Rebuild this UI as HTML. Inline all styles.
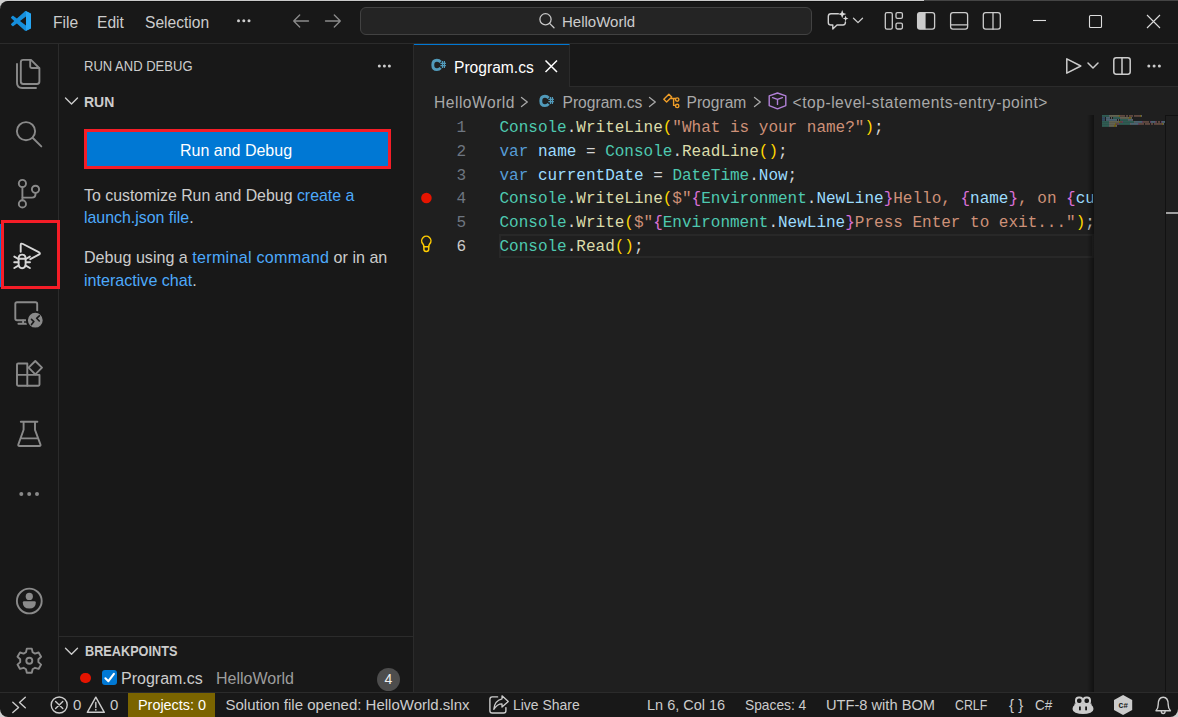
<!DOCTYPE html>
<html><head><meta charset="utf-8">
<style>
*{box-sizing:border-box;margin:0;padding:0}
html,body{width:1178px;height:717px;overflow:hidden;background:#181818}
body{position:relative;font-family:"Liberation Sans",sans-serif;color:#cccccc;font-size:15.6px}
.a{position:absolute;white-space:pre}
.mono{font-family:"Liberation Mono",monospace}
#ov{position:absolute;left:0;top:0;width:1178px;height:717px}
#topline{left:0;top:0;width:924px;height:1px;background:#c9c9c9}
#topline2{left:924px;top:0;width:254px;height:1px;background:#444444}
#titlebar{left:0;top:1px;width:1178px;height:43px;background:#181818;border-bottom:1px solid #2b2b2b}
#actbar{left:0;top:44px;width:59px;height:648px;background:#181818;border-right:1px solid #2b2b2b}
#sidebar{left:59px;top:44px;width:355px;height:648px;background:#181818;border-right:1px solid #2b2b2b}
#editor{left:414px;top:44px;width:764px;height:648px;background:#1f1f1f}
#tabs{left:414px;top:44px;width:764px;height:43px;background:#181818;border-bottom:1px solid #2b2b2b}
#tab{left:414px;top:44px;width:156px;height:43px;background:#1f1f1f;border-right:1px solid #2b2b2b;border-top:1px solid #0078d4}
#statusbar{left:0;top:692px;width:1178px;height:25px;background:#181818;border-top:1px solid #2b2b2b}
.link{color:#4daafc}
.code{font-family:"Liberation Mono",monospace;font-size:16px;line-height:23.82px}
.ln{position:absolute;left:414px;width:52px;text-align:right;color:#6e7681}
.cl{position:absolute;left:499.5px}
.t{color:#4ec9b0}.f{color:#dcdcaa}.p{color:#d4d4d4}.s{color:#ce9178}.k{color:#569cd6}.v{color:#9cdcfe}
.b1{color:#ffd700}.b2{color:#da70d6}
</style></head>
<body>
<div class="a" id="topline"></div><div class="a" id="topline2"></div>
<div class="a" id="titlebar"></div>
<div class="a" style="left:8px;top:1px;width:916px;height:1px;background:#0f0f0f"></div>
<div class="a" id="actbar"></div>
<div class="a" id="sidebar"></div>
<div class="a" id="editor"></div>
<div class="a" id="tabs"></div>
<div class="a" id="tab"></div>
<div class="a" id="statusbar"></div>
<div class="a" style="left:0;top:0;width:9px;height:9px;background:#cfcfcf"></div>
<div class="a" style="left:0;top:1px;width:18px;height:18px;background:#181818;border-top-left-radius:8px;border-top:1px solid #0e0e0e"></div>
<div class="a" style="left:0;top:708px;width:9px;height:9px;background:#cfcfcf"></div>
<div class="a" style="left:0;top:699px;width:18px;height:18px;background:#181818;border-bottom-left-radius:8px"></div>
<div class="a" style="left:1169px;top:708px;width:9px;height:9px;background:#cfcfcf"></div>
<div class="a" style="left:1160px;top:699px;width:18px;height:18px;background:#181818;border-bottom-right-radius:8px"></div>

<!-- TITLEBAR -->
<div class="a" id="t-file" style="left:53px;top:13px;line-height:20px">File</div>
<div class="a" id="t-edit" style="left:97px;top:13px;line-height:20px">Edit</div>
<div class="a" id="t-sel" style="left:145px;top:13px;line-height:20px">Selection</div>
<div class="a" id="search" style="left:360px;top:7px;width:452px;height:28px;border:1px solid #424242;border-radius:6px;background:#242424"></div>
<div class="a" id="t-search" style="left:562px;top:12px;font-size:15px;line-height:20px">HelloWorld</div>

<!-- SIDEBAR -->
<div class="a" id="s-title" style="left:84px;top:57px;font-size:14px;line-height:18px;transform:scaleX(0.93);transform-origin:0 0">RUN AND DEBUG</div>
<div class="a" id="s-run" style="left:84px;top:93px;font-size:14px;line-height:18px;font-weight:bold">RUN</div>
<div class="a" id="btn" style="left:84px;top:129px;width:307px;height:40px;border:3px solid #f51d27;background:#0078d4"></div>
<div class="a" id="btn-t" style="left:82.5px;top:140.5px;width:307px;text-align:center;color:#fff;font-size:16px;line-height:20px">Run and Debug</div>
<div class="a" id="p1" style="left:84px;top:184.5px;font-size:15.9px;line-height:22.6px">To customize Run and Debug <span class="link">create a</span>
<span class="link">launch.json file</span>.</div>
<div class="a" id="p2" style="left:84px;top:246.2px;font-size:16.1px;line-height:22.6px">Debug using a <span class="link" style="letter-spacing:0.28px">terminal command</span> or in an
<span class="link">interactive chat</span>.</div>
<div class="a" style="left:59px;top:636px;width:354px;height:1px;background:#2b2b2b"></div>
<div class="a" id="s-bp" style="left:85px;top:642px;font-size:14px;line-height:18px;font-weight:bold;transform:scaleX(0.907);transform-origin:0 0">BREAKPOINTS</div>
<div class="a" id="bp-dot" style="left:80px;top:672.6px;width:10.5px;height:10.5px;border-radius:50%;background:#e51400"></div>
<div class="a" id="bp-chk" style="left:102px;top:670px;width:15px;height:15px;border-radius:3px;background:#0078d4"></div>
<div class="a" id="bp-file" style="left:121px;top:669px;font-size:16px;line-height:20px">Program.cs</div>
<div class="a" id="bp-desc" style="left:216px;top:669px;font-size:16px;line-height:20px;color:#9d9d9d">HelloWorld</div>
<div class="a" id="bp-badge" style="left:377px;top:667.8px;width:23px;height:23px;border-radius:50%;background:#4d4d4d;color:#f0f0f0;text-align:center;font-size:14px;line-height:22px">4</div>

<!-- EDITOR -->
<div class="a" id="tab-name" style="left:454px;top:57.7px;line-height:20px;color:#fff">Program.cs</div>
<div class="a" id="bc1" style="left:434px;top:93px;letter-spacing:0.5px;line-height:20px;color:#a9a9a9">HelloWorld</div>
<div class="a" id="bc2" style="left:562.5px;top:93px;line-height:20px;color:#a9a9a9">Program.cs</div>
<div class="a" id="bc3" style="left:686.5px;top:93px;line-height:20px;color:#a9a9a9">Program</div>
<div class="a" id="bc4" style="left:792.5px;top:93px;letter-spacing:0.53px;line-height:20px;color:#a9a9a9">&lt;top-level-statements-entry-point&gt;</div>

<div class="a" id="curline" style="left:499px;top:234.2px;width:595px;height:23.75px;border:2px solid #282828"></div>
<div class="a code" style="left:0;top:116.9px;width:1093px;height:560px;overflow:hidden">
<div class="ln" style="top:0.00px">1</div><div class="ln" style="top:23.82px">2</div><div class="ln" style="top:47.64px">3</div><div class="ln" style="top:71.46px">4</div><div class="ln" style="top:95.28px">5</div><div class="ln" style="top:119.10px;color:#cccccc">6</div>
<div class="cl" id="c1" style="top:0.00px"><span class="t">Console</span><span class="p">.</span><span class="f">WriteLine</span><span class="b1">(</span><span class="s">"What is your name?"</span><span class="b1">)</span><span class="p">;</span></div>
<div class="cl" id="c2" style="top:23.82px"><span class="k">var</span> <span class="v">name</span> <span class="p">=</span> <span class="t">Console</span><span class="p">.</span><span class="f">ReadLine</span><span class="b1">()</span><span class="p">;</span></div>
<div class="cl" id="c3" style="top:47.64px"><span class="k">var</span> <span class="v">currentDate</span> <span class="p">=</span> <span class="t">DateTime</span><span class="p">.</span><span class="v">Now</span><span class="p">;</span></div>
<div class="cl" id="c4" style="top:71.46px"><span class="t">Console</span><span class="p">.</span><span class="f">WriteLine</span><span class="b1">(</span><span class="s">$"</span><span class="b2">{</span><span class="t">Environment</span><span class="p">.</span><span class="v">NewLine</span><span class="b2">}</span><span class="s">Hello, </span><span class="b2">{</span><span class="v">name</span><span class="b2">}</span><span class="s">, on </span><span class="b2">{</span><span class="v">currentDate</span><span class="b2">}</span></div>
<div class="cl" id="c5" style="top:95.28px"><span class="t">Console</span><span class="p">.</span><span class="f">Write</span><span class="b1">(</span><span class="s">$"</span><span class="b2">{</span><span class="t">Environment</span><span class="p">.</span><span class="v">NewLine</span><span class="b2">}</span><span class="s">Press Enter to exit..."</span><span class="b1">)</span><span class="p">;</span></div>
<div class="cl" id="c6" style="top:119.10px"><span class="t">Console</span><span class="p">.</span><span class="f">Read</span><span class="b1">()</span><span class="p">;</span></div>
</div>
<!-- minimap & scrollbar -->
<div class="a" id="mmshadow" style="left:1087px;top:115px;width:7px;height:577px;background:linear-gradient(to right,rgba(0,0,0,0),rgba(0,0,0,0.45))"></div>
<div class="a" id="minimap" style="left:1094px;top:115px;width:71px;height:577px;background:#1f1f1f"></div>
<div class="a" id="vscroll" style="left:1165px;top:115px;width:13px;height:577px;background:#1f1f1f;border-left:1px solid #121212;border-top:1px solid #121212"></div>
<div class="a" style="left:1166px;top:212px;width:12px;height:2px;background:#a0a0a0"></div>

<!-- STATUS -->
<div class="a" id="st-proj" style="left:128px;top:693px;width:87px;height:24px;background:#7a6400"></div>
<div class="a" id="st-e0" style="left:73px;top:695px;font-size:15px;line-height:20px">0</div>
<div class="a" id="st-w0" style="left:110px;top:695px;font-size:15px;line-height:20px">0</div>
<div class="a" id="st-projt" style="left:137.5px;top:695px;font-size:15px;line-height:20px;color:#fff;transform:scaleX(0.96);transform-origin:0 0">Projects: 0</div>
<div class="a" id="st-sol" style="left:225.5px;top:695px;font-size:15px;line-height:20px">Solution file opened: HelloWorld.slnx</div>
<div class="a" id="st-ls" style="left:513px;top:695px;font-size:15px;line-height:20px;transform:scaleX(0.93);transform-origin:0 0">Live Share</div>
<div class="a" id="st-ln" style="left:647px;top:695px;font-size:15px;line-height:20px;transform:scaleX(0.966);transform-origin:0 0">Ln 6, Col 16</div>
<div class="a" id="st-sp" style="left:744.5px;top:695px;font-size:15px;line-height:20px;transform:scaleX(0.918);transform-origin:0 0">Spaces: 4</div>
<div class="a" id="st-enc" style="left:825.5px;top:695px;font-size:15px;line-height:20px;transform:scaleX(0.976);transform-origin:0 0">UTF-8 with BOM</div>
<div class="a" id="st-crlf" style="left:955px;top:695px;font-size:15px;line-height:20px;transform:scaleX(0.823);transform-origin:0 0">CRLF</div>
<div class="a" id="st-br" style="left:1009px;top:695px;font-size:15px;line-height:20px">{ }</div>
<div class="a" id="st-cs" style="left:1035px;top:695px;font-size:15px;line-height:20px;transform:scaleX(0.9);transform-origin:0 0">C#</div>
<svg class="a" style="left:0;top:0" width="1178" height="717"><g opacity="0.45"><rect x="1102.0" y="115.2" width="7.0" height="1.5" fill="#4ec9b0"/><rect x="1109.0" y="115.2" width="1.0" height="1.5" fill="#d4d4d4"/><rect x="1110.0" y="115.2" width="9.0" height="1.5" fill="#dcdcaa"/><rect x="1119.0" y="115.2" width="1.0" height="1.5" fill="#ffd700"/><rect x="1120.0" y="115.2" width="5.0" height="1.5" fill="#ce9178"/><rect x="1126.0" y="115.2" width="2.0" height="1.5" fill="#ce9178"/><rect x="1129.0" y="115.2" width="4.0" height="1.5" fill="#ce9178"/><rect x="1134.0" y="115.2" width="6.0" height="1.5" fill="#ce9178"/><rect x="1140.0" y="115.2" width="1.0" height="1.5" fill="#ffd700"/><rect x="1141.0" y="115.2" width="1.0" height="1.5" fill="#d4d4d4"/><rect x="1102.0" y="117.2" width="3.0" height="1.5" fill="#569cd6"/><rect x="1106.0" y="117.2" width="4.0" height="1.5" fill="#9cdcfe"/><rect x="1111.0" y="117.2" width="1.0" height="1.5" fill="#d4d4d4"/><rect x="1113.0" y="117.2" width="7.0" height="1.5" fill="#4ec9b0"/><rect x="1120.0" y="117.2" width="1.0" height="1.5" fill="#d4d4d4"/><rect x="1121.0" y="117.2" width="8.0" height="1.5" fill="#dcdcaa"/><rect x="1129.0" y="117.2" width="2.0" height="1.5" fill="#ffd700"/><rect x="1131.0" y="117.2" width="1.0" height="1.5" fill="#d4d4d4"/><rect x="1102.0" y="119.2" width="3.0" height="1.5" fill="#569cd6"/><rect x="1106.0" y="119.2" width="11.0" height="1.5" fill="#9cdcfe"/><rect x="1118.0" y="119.2" width="1.0" height="1.5" fill="#d4d4d4"/><rect x="1120.0" y="119.2" width="8.0" height="1.5" fill="#4ec9b0"/><rect x="1128.0" y="119.2" width="1.0" height="1.5" fill="#d4d4d4"/><rect x="1129.0" y="119.2" width="3.0" height="1.5" fill="#9cdcfe"/><rect x="1132.0" y="119.2" width="1.0" height="1.5" fill="#d4d4d4"/><rect x="1102.0" y="121.2" width="7.0" height="1.5" fill="#4ec9b0"/><rect x="1109.0" y="121.2" width="1.0" height="1.5" fill="#d4d4d4"/><rect x="1110.0" y="121.2" width="9.0" height="1.5" fill="#dcdcaa"/><rect x="1119.0" y="121.2" width="1.0" height="1.5" fill="#ffd700"/><rect x="1120.0" y="121.2" width="2.0" height="1.5" fill="#ce9178"/><rect x="1122.0" y="121.2" width="1.0" height="1.5" fill="#da70d6"/><rect x="1123.0" y="121.2" width="11.0" height="1.5" fill="#4ec9b0"/><rect x="1134.0" y="121.2" width="1.0" height="1.5" fill="#d4d4d4"/><rect x="1135.0" y="121.2" width="7.0" height="1.5" fill="#9cdcfe"/><rect x="1142.0" y="121.2" width="1.0" height="1.5" fill="#da70d6"/><rect x="1143.0" y="121.2" width="6.0" height="1.5" fill="#ce9178"/><rect x="1150.0" y="121.2" width="1.0" height="1.5" fill="#da70d6"/><rect x="1151.0" y="121.2" width="4.0" height="1.5" fill="#9cdcfe"/><rect x="1155.0" y="121.2" width="1.0" height="1.5" fill="#da70d6"/><rect x="1156.0" y="121.2" width="1.0" height="1.5" fill="#ce9178"/><rect x="1158.0" y="121.2" width="2.0" height="1.5" fill="#ce9178"/><rect x="1161.0" y="121.2" width="1.0" height="1.5" fill="#da70d6"/><rect x="1162.0" y="121.2" width="3.0" height="1.5" fill="#9cdcfe"/><rect x="1173.0" y="121.2" width="-8.0" height="1.5" fill="#da70d6"/><rect x="1174.0" y="121.2" width="-9.0" height="1.5" fill="#ce9178"/><rect x="1176.0" y="121.2" width="-11.0" height="1.5" fill="#ffd700"/><rect x="1177.0" y="121.2" width="-12.0" height="1.5" fill="#d4d4d4"/><rect x="1102.0" y="123.2" width="7.0" height="1.5" fill="#4ec9b0"/><rect x="1109.0" y="123.2" width="1.0" height="1.5" fill="#d4d4d4"/><rect x="1110.0" y="123.2" width="5.0" height="1.5" fill="#dcdcaa"/><rect x="1115.0" y="123.2" width="1.0" height="1.5" fill="#ffd700"/><rect x="1116.0" y="123.2" width="2.0" height="1.5" fill="#ce9178"/><rect x="1118.0" y="123.2" width="1.0" height="1.5" fill="#da70d6"/><rect x="1119.0" y="123.2" width="11.0" height="1.5" fill="#4ec9b0"/><rect x="1130.0" y="123.2" width="1.0" height="1.5" fill="#d4d4d4"/><rect x="1131.0" y="123.2" width="7.0" height="1.5" fill="#9cdcfe"/><rect x="1138.0" y="123.2" width="1.0" height="1.5" fill="#da70d6"/><rect x="1139.0" y="123.2" width="5.0" height="1.5" fill="#ce9178"/><rect x="1145.0" y="123.2" width="5.0" height="1.5" fill="#ce9178"/><rect x="1151.0" y="123.2" width="2.0" height="1.5" fill="#ce9178"/><rect x="1154.0" y="123.2" width="8.0" height="1.5" fill="#ce9178"/><rect x="1162.0" y="123.2" width="1.0" height="1.5" fill="#ffd700"/><rect x="1163.0" y="123.2" width="1.0" height="1.5" fill="#d4d4d4"/><rect x="1102.0" y="125.2" width="7.0" height="1.5" fill="#4ec9b0"/><rect x="1109.0" y="125.2" width="1.0" height="1.5" fill="#d4d4d4"/><rect x="1110.0" y="125.2" width="4.0" height="1.5" fill="#dcdcaa"/><rect x="1114.0" y="125.2" width="2.0" height="1.5" fill="#ffd700"/><rect x="1116.0" y="125.2" width="1.0" height="1.5" fill="#d4d4d4"/></g></svg>
<svg id="ov" width="1178" height="717" viewBox="0 0 1178 717" fill="none" stroke-linecap="round" stroke-linejoin="round">
<!-- VS Code logo -->
<g transform="translate(11,11) scale(0.2)">
<path fill="#168fdc" fill-rule="evenodd" d="M70.9 99.3C72.5 99.9 74.3 99.9 75.9 99.1L96.5 89.2C98.6 88.2 100 86 100 83.6V16.4C100 14 98.6 11.8 96.5 10.8L75.9 0.9C73.8 -0.1 71.3 0.1 69.5 1.4C69.3 1.6 69 1.8 68.8 2.1L29.4 38L12.2 25C10.6 23.8 8.4 23.9 6.9 25.2L1.4 30.3C-0.5 31.9 -0.5 34.8 1.4 36.4L16.2 50L1.4 63.6C-0.5 65.2 -0.5 68.1 1.4 69.7L6.9 74.8C8.4 76.1 10.6 76.2 12.2 75L29.4 62L68.8 97.9C69.4 98.5 70.1 99 70.9 99.3ZM75 27.3L45.1 50L75 72.7V27.3Z"/>
<path fill="#27a6f3" d="M75 0.3L75.9 0.9L96.5 10.8C98.6 11.8 100 14 100 16.4V83.6C100 86 98.6 88.2 96.5 89.2L75.9 99.1L75 99.6Z"/>
</g>
<g fill="#cccccc"><circle cx="238.5" cy="20.8" r="1.5"/><circle cx="243.8" cy="20.8" r="1.5"/><circle cx="249" cy="20.8" r="1.5"/></g>
<!-- back / forward arrows -->
<g stroke="#8b8b8b" stroke-width="1.3">
<path d="M299.7 15L293.7 21L299.7 27M293.7 21H308.5"/>
<path d="M334.3 15L340.3 21L334.3 27M340.3 21H325.5"/>
</g>
<!-- search icon -->
<g stroke="#c8c8c8" stroke-width="1.3"><circle cx="545.5" cy="19.3" r="5.6"/><path d="M549.6 23.4L554 27.8"/></g>
<!-- chat icon -->
<g stroke="#d0d0d0" stroke-width="1.4">
<path d="M838.3 13.8H831Q828.3 13.8 828.3 16.5V22.4Q828.3 25 831 25H832.8V29L837 25H843Q845.4 25 845.4 22.6V22"/>
</g>
<g fill="#d8d8d8"><path d="M842.2 10L843.3 13L846.3 14.1L843.3 15.2L842.2 18.2L841.1 15.2L838.1 14.1L841.1 13Z"/><path d="M845.6 15.6L846.4 17.7L848.5 18.5L846.4 19.3L845.6 21.4L844.8 19.3L842.7 18.5L844.8 17.7Z"/></g>
<path stroke="#cccccc" stroke-width="1.3" d="M853.5 18.3L858 22.6L862.5 18.3"/>
<!-- layout icons -->
<g stroke="#cccccc" stroke-width="1.3">
<rect x="885.3" y="12.6" width="7" height="16.6" rx="1.6"/>
<rect x="896" y="12.6" width="6.4" height="5.8" rx="1.4"/>
<rect x="896" y="23.2" width="6.4" height="5.8" rx="1.4"/>
<rect x="917.6" y="12.6" width="17" height="16.6" rx="2.4"/>
<rect x="950.6" y="12.6" width="17" height="16.6" rx="2.4"/>
<path d="M950.6 24.8H967.6"/>
<rect x="983.3" y="12.6" width="17" height="16.6" rx="2.4"/>
<path d="M993 12.6V29.2"/>
</g>
<path fill="#cccccc" d="M919.8 12.6H925.6V29.2H919.8Q917.6 29.2 917.6 27V14.8Q917.6 12.6 919.8 12.6Z"/>
<!-- window controls -->
<g stroke="#dcdcdc" stroke-width="1.1" stroke-linecap="butt">
<path d="M1033 20.5H1046"/>
<rect x="1089.5" y="15.5" width="12" height="12" rx="1"/>
<path d="M1147 15L1160 28M1160 15L1147 28"/>
</g>

<!-- ACTIVITY BAR -->
<g stroke="#8a8a8a" stroke-width="1.9">
<!-- explorer -->
<path d="M23.2 59.9H31L39.4 68.2V81.6Q39.4 84 37 84H23.2Q20.8 84 20.8 81.6V62.3Q20.8 59.9 23.2 59.9Z"/>
<path d="M30.2 60.2V66.6Q30.2 68 31.6 68H39"/>
<path d="M17 64V82.8Q17 88 22.2 88H36"/>
<!-- search -->
<circle cx="26" cy="131.2" r="9.1"/>
<path d="M32.6 137.8L41.3 146.4"/>
<!-- scm -->
<circle cx="22.4" cy="183.5" r="3.6"/>
<circle cx="22.4" cy="203.9" r="3.6"/>
<circle cx="35.5" cy="189.3" r="3.6"/>
<path d="M22.4 187.1V200.3"/>
<path d="M35.5 192.9V194Q35.5 197.6 31.9 197.6H22.6"/>
<!-- remote -->
<path d="M27.5 320.2H17Q15.3 320.2 15.3 318.5V304Q15.3 302.2 17 302.2H35.5Q37.2 302.2 37.2 304V311"/>
<path d="M23.1 320.5V323.8M18.4 323.8H26.4"/>
<!-- extensions -->
<path d="M17 364.6Q17 363.5 18.1 363.5H27.3V385.7H18.1Q17 385.7 17 384.6Z"/>
<path d="M17 374.9H39.5V384.6Q39.5 385.7 38.4 385.7H27.3"/>
<path d="M35.3 361L42 367.7L35.3 374.4L28.6 367.7Z"/>
<!-- testing -->
<path d="M20.8 421.8H37.4M23.6 422V429.8L18.3 444.6Q18 446 19.4 446H39.4Q40.8 446 40.5 444.6L35 429.8V422M20.6 438.4H38"/>
<!-- account -->
<circle cx="29.3" cy="601" r="12.4"/>
<!-- settings -->
<path d="M26.8 648.6H31.8L32.6 652.2L35 653.6L38.6 652.5L41.1 656.8L38.4 659.3V662.1L41.1 664.6L38.6 668.9L35 667.8L32.6 669.2L31.8 672.8H26.8L26 669.2L23.6 667.8L20 668.9L17.5 664.6L20.2 662.1V659.3L17.5 656.8L20 652.5L23.6 653.6L26 652.2Z"/>
<circle cx="29.3" cy="660.7" r="3"/>
</g>
<g fill="#8a8a8a">
<circle cx="35.3" cy="320.2" r="8.4" stroke="#181818" stroke-width="2"/>
<circle cx="21.3" cy="494" r="2"/><circle cx="29.2" cy="494" r="2"/><circle cx="37" cy="494" r="2"/>
<circle cx="29.3" cy="596.4" r="3.6"/>
<path d="M22.8 602.5Q22.8 601.2 24.1 601.2H34.5Q35.8 601.2 35.8 602.5Q35.8 608.6 29.3 608.6Q22.8 608.6 22.8 602.5Z"/>
</g>
<path stroke="#181818" stroke-width="1.6" d="M31.5 319.4L33.9 321.6L31.5 324.6M39.3 315.8L36.6 318.3L39.3 321"/>
<!-- debug (active) -->
<g stroke="#d7d7d7" stroke-width="1.9">
<path d="M20.7 251.8V245.2Q20.7 242.8 23 244L39.2 252.4Q40.6 253.4 39.2 254.4L30.3 259.2"/>
<path d="M18.6 258.6Q18.6 254.6 22.1 254.6Q25.6 254.6 25.6 258.6V263.8Q25.6 268.2 22.1 268.2Q18.6 268.2 18.6 263.8Z"/>
<path d="M18.6 258.8H25.6M14.3 256.6L18.4 259M29.9 256.6L25.8 259M14.2 262.3H18.4M25.8 262.3H30M14.3 268L18.4 265.6M29.9 268L25.8 265.6"/>
</g>
<!-- red highlight box -->
<rect x="2.5" y="221.5" width="56" height="66" stroke="#f51d27" stroke-width="3" stroke-linecap="butt" stroke-linejoin="miter"/>
<rect x="0" y="224" width="1" height="63" fill="#0078d4"/>

<!-- SIDEBAR icons -->
<g fill="#cccccc"><circle cx="379.3" cy="66" r="1.5"/><circle cx="384.4" cy="66" r="1.5"/><circle cx="389.4" cy="66" r="1.5"/></g>
<g stroke="#cccccc" stroke-width="1.4">
<path d="M65.5 98L71.5 104L77.5 98"/>
<path d="M65.5 648.2L71.5 654.2L77.5 648.2"/>
</g>
<path stroke="#ffffff" stroke-width="2.1" d="M105.4 678.3L108.4 681.2L113.9 673.8"/>

<!-- EDITOR tab icons -->
<g stroke="#cccccc" stroke-width="1.5"><path d="M1066.8 58.8L1080.8 66L1066.8 73.2Z"/><path d="M1088 63L1093 68L1098 63"/></g>
<g stroke="#cccccc" stroke-width="1.5"><rect x="1113.8" y="57.8" width="16.4" height="16.4" rx="2.4"/><path d="M1122 57.8V74.2"/></g>
<g fill="#cccccc"><circle cx="1148.8" cy="66" r="1.5"/><circle cx="1154.1" cy="66" r="1.5"/><circle cx="1159.4" cy="66" r="1.5"/></g>
<path stroke="#ffffff" stroke-width="1.5" stroke-linecap="butt" d="M545.5 60.5L557 72M557 60.5L545.5 72"/>
<!-- C# icons -->
<g>
<path stroke="#519aba" stroke-width="2.9" stroke-linecap="butt" d="M440.6 62Q439.2 60.2 436.9 60.2Q432.8 60.2 432.8 64.9Q432.8 69.6 436.9 69.6Q439.2 69.6 440.6 67.8"/>
<path stroke="#519aba" stroke-width="1.2" stroke-linecap="butt" d="M440.4 63.3H445.9M440.4 65.6H445.9M442.5 61V67.9M444.4 61V67.9"/>
</g>
<g transform="translate(108,36)">
<path stroke="#519aba" stroke-width="2.9" stroke-linecap="butt" d="M440.6 62Q439.2 60.2 436.9 60.2Q432.8 60.2 432.8 64.9Q432.8 69.6 436.9 69.6Q439.2 69.6 440.6 67.8"/>
<path stroke="#519aba" stroke-width="1.2" stroke-linecap="butt" d="M440.4 63.3H445.9M440.4 65.6H445.9M442.5 61V67.9M444.4 61V67.9"/>
</g>
<!-- breadcrumb chevrons -->
<g stroke="#a9a9a9" stroke-width="1.3">
<path d="M521.5 97.5L527.3 102L521.5 106.5"/>
<path d="M649.5 97.5L655.3 102L649.5 106.5"/>
<path d="M754.5 97.5L760.3 102L754.5 106.5"/>
</g>
<!-- class icon (orange) -->
<g stroke="#ee9d28" stroke-width="1.4">
<path d="M663.8 99.3L668.9 94.2L671.7 97L666.6 102.1Z"/>
<path d="M670.6 98.5H675.4M673.6 98.7V105.4H675.4"/>
<circle cx="677.2" cy="99.6" r="1.7"/><circle cx="677.2" cy="105.9" r="1.7"/>
</g>
<!-- cube icon -->
<g stroke="#b180d7" stroke-width="1.4">
<path d="M777.5 93L785.8 95.9V105.6L777.5 108.8L769.2 105.6V95.9Z"/>
<path d="M772.6 97.6L777.5 99.4L782.4 97.6M777.5 99.4V104.4"/>
</g>
<!-- gutter -->
<circle cx="426.4" cy="198" r="5.3" fill="#e51400"/>
<g stroke="#ffcc00" stroke-width="1.5">
<path d="M423.9 246.8Q423.9 245.1 422.8 243.8A4.6 4.6 0 1 1 429.8 243.8Q428.7 245.1 428.7 246.8Z"/>
<path d="M423.9 246.8V249.6Q423.9 251.4 426.3 251.4Q428.7 251.4 428.7 249.6V246.8"/>
</g>

<!-- STATUS BAR icons -->
<g stroke="#cccccc" stroke-width="1.4">
<path d="M12.8 702.2L18.6 707.4L12.8 712.6M25.3 697.3L19.5 702.5L25.3 707.7"/>
<circle cx="59.2" cy="705" r="8"/>
<path d="M55.6 701.4L62.8 708.6M62.8 701.4L55.6 708.6"/>
<path d="M95.8 697.2L104.3 712.3H87.3Z"/>
<path d="M95.8 702.5V707.5"/>
<path d="M502 695.8L508.3 701.4L502 707V703.9Q497.2 703.9 493.8 709.4Q494.4 700.6 502 698.8Z" stroke-width="1.3"/>
<path d="M497.6 696.9H492.2Q489.9 696.9 489.9 699.2V710.7Q489.9 713 492.2 713H503.6Q505.9 713 505.9 710.7V707.6"/>
</g>
<circle cx="95.8" cy="709.8" r="0.9" fill="#cccccc"/>
<!-- copilot -->
<path fill="#cccccc" d="M1074.5 705Q1072.5 706.5 1072.5 709Q1072.5 711.5 1075.5 712.8Q1079 714 1083 714Q1087 714 1090.5 712.8Q1093.5 711.5 1093.5 709Q1093.5 706.5 1091.5 705V703.5H1074.5Z"/>
<g stroke="#cccccc" stroke-width="2"><rect x="1076" y="697.5" width="6.5" height="6.5" rx="2.8"/><rect x="1083.5" y="697.5" width="6.5" height="6.5" rx="2.8"/></g>
<g fill="#181818"><rect x="1079" y="706.5" width="1.8" height="3.8"/><rect x="1085.2" y="706.5" width="1.8" height="3.8"/></g>
<!-- C# hex -->
<path fill="#cccccc" d="M1123.1 695L1132.2 700V710L1123.1 715L1114 710V700Z"/>
<text x="1123.3" y="707.6" fill="#181818" font-family="Liberation Mono" font-weight="bold" font-size="8" text-anchor="middle">C#</text>
<!-- bell -->
<g stroke="#cccccc" stroke-width="1.4">
<path d="M1156 710.8Q1158.2 708.6 1158.2 704.5Q1158.2 697.2 1163.2 697.2Q1168.2 697.2 1168.2 704.5Q1168.2 708.6 1170.4 710.8Z"/>
<path d="M1161.3 711.3Q1161.3 713.5 1163.2 713.5Q1165.1 713.5 1165.1 711.3"/>
</g>
</svg>
</body></html>
